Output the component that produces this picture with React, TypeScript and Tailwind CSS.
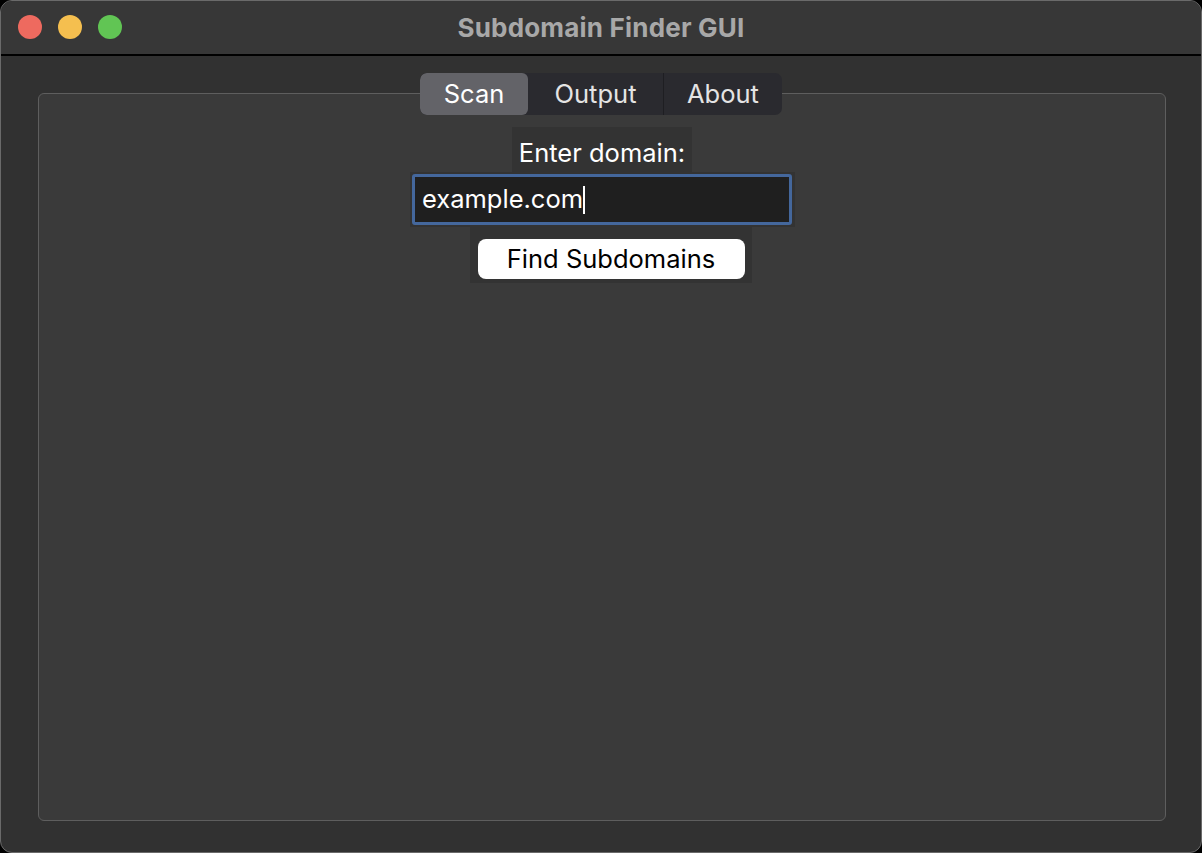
import { useState } from 'react';

const tabs = ['Scan', 'Output', 'About'];

export default function App() {
    const [active, setActive] = useState('Scan');
    const [domain, setDomain] = useState('example.com');

    return (
        <div className="w-[1202px] h-[853px] bg-black font-['Inter',sans-serif]">
            <div className="w-full h-full rounded-[12px] border border-[#6a6a6a] bg-[#313131] overflow-hidden flex flex-col">
                {/* title bar */}
                <div className="relative h-[55px] shrink-0 bg-[#373737] border-b-2 border-black flex items-center justify-center">
                    <div className="absolute left-[17px] top-[14px] flex gap-4">
                        <span className="w-6 h-6 rounded-full bg-[#ee6a5f]" />
                        <span className="w-6 h-6 rounded-full bg-[#f5bf4f]" />
                        <span className="w-6 h-6 rounded-full bg-[#61c554]" />
                    </div>
                    <h1 className="text-[26px] font-bold text-[#a8a8a8] tracking-[0.2px]">Subdomain Finder GUI</h1>
                </div>

                {/* body */}
                <div className="flex-1 flex flex-col pl-[37px] pr-[35px] pt-[17px] pb-[31px]">
                    <div className="relative z-10 self-center mr-[2px] flex h-[42px] rounded-[7px] bg-[#2a2a2f] overflow-hidden text-[25.5px] text-[#e4e4e4]">
                        {tabs.map((t, i) => (
                            <button
                                key={t}
                                onClick={() => setActive(t)}
                                className={`h-full rounded-[6px] ${i === 0 ? 'w-[108px]' : i === 1 ? 'w-[135px]' : 'w-[119px] border-l border-[#1e1e22] rounded-l-none'} ${active === t ? 'bg-[#636368] text-white' : ''}`}
                            >
                                {t}
                            </button>
                        ))}
                    </div>

                    <div className="flex-1 -mt-[22px] rounded-[6px] border border-[#5e5e5e] bg-[#3a3a3a] flex flex-col items-center pt-[33px]">
                        <div className="h-[45px] w-[180px] bg-[#333333] flex items-center justify-center pt-[7px] text-[25.5px] text-white">
                            Enter domain:
                        </div>
                        <div className="h-[55px] w-[385px] bg-[#333333] flex items-center justify-center">
                            <div className="w-[380px] h-[51px] rounded-[3px] border-[3px] border-[#44679c] bg-[#1f1f1f] px-[7px] flex items-center">
                                <input
                                    value={domain}
                                    onChange={(e) => setDomain(e.target.value)}
                                    size={domain.length}
                                    className="bg-transparent text-[25.5px] text-white outline-none field-sizing-content"
                                />
                                <span className="w-[1.5px] h-[28px] bg-white" />
                            </div>
                        </div>
                        <div className="ml-[18px] h-[56px] w-[282px] bg-[#333333] flex justify-center pt-[12px]">
                            <button className="w-[267px] h-[40px] rounded-[8px] bg-white text-[25.5px] text-black">
                                Find Subdomains
                            </button>
                        </div>
                    </div>
                </div>
            </div>
        </div>
    );
}
